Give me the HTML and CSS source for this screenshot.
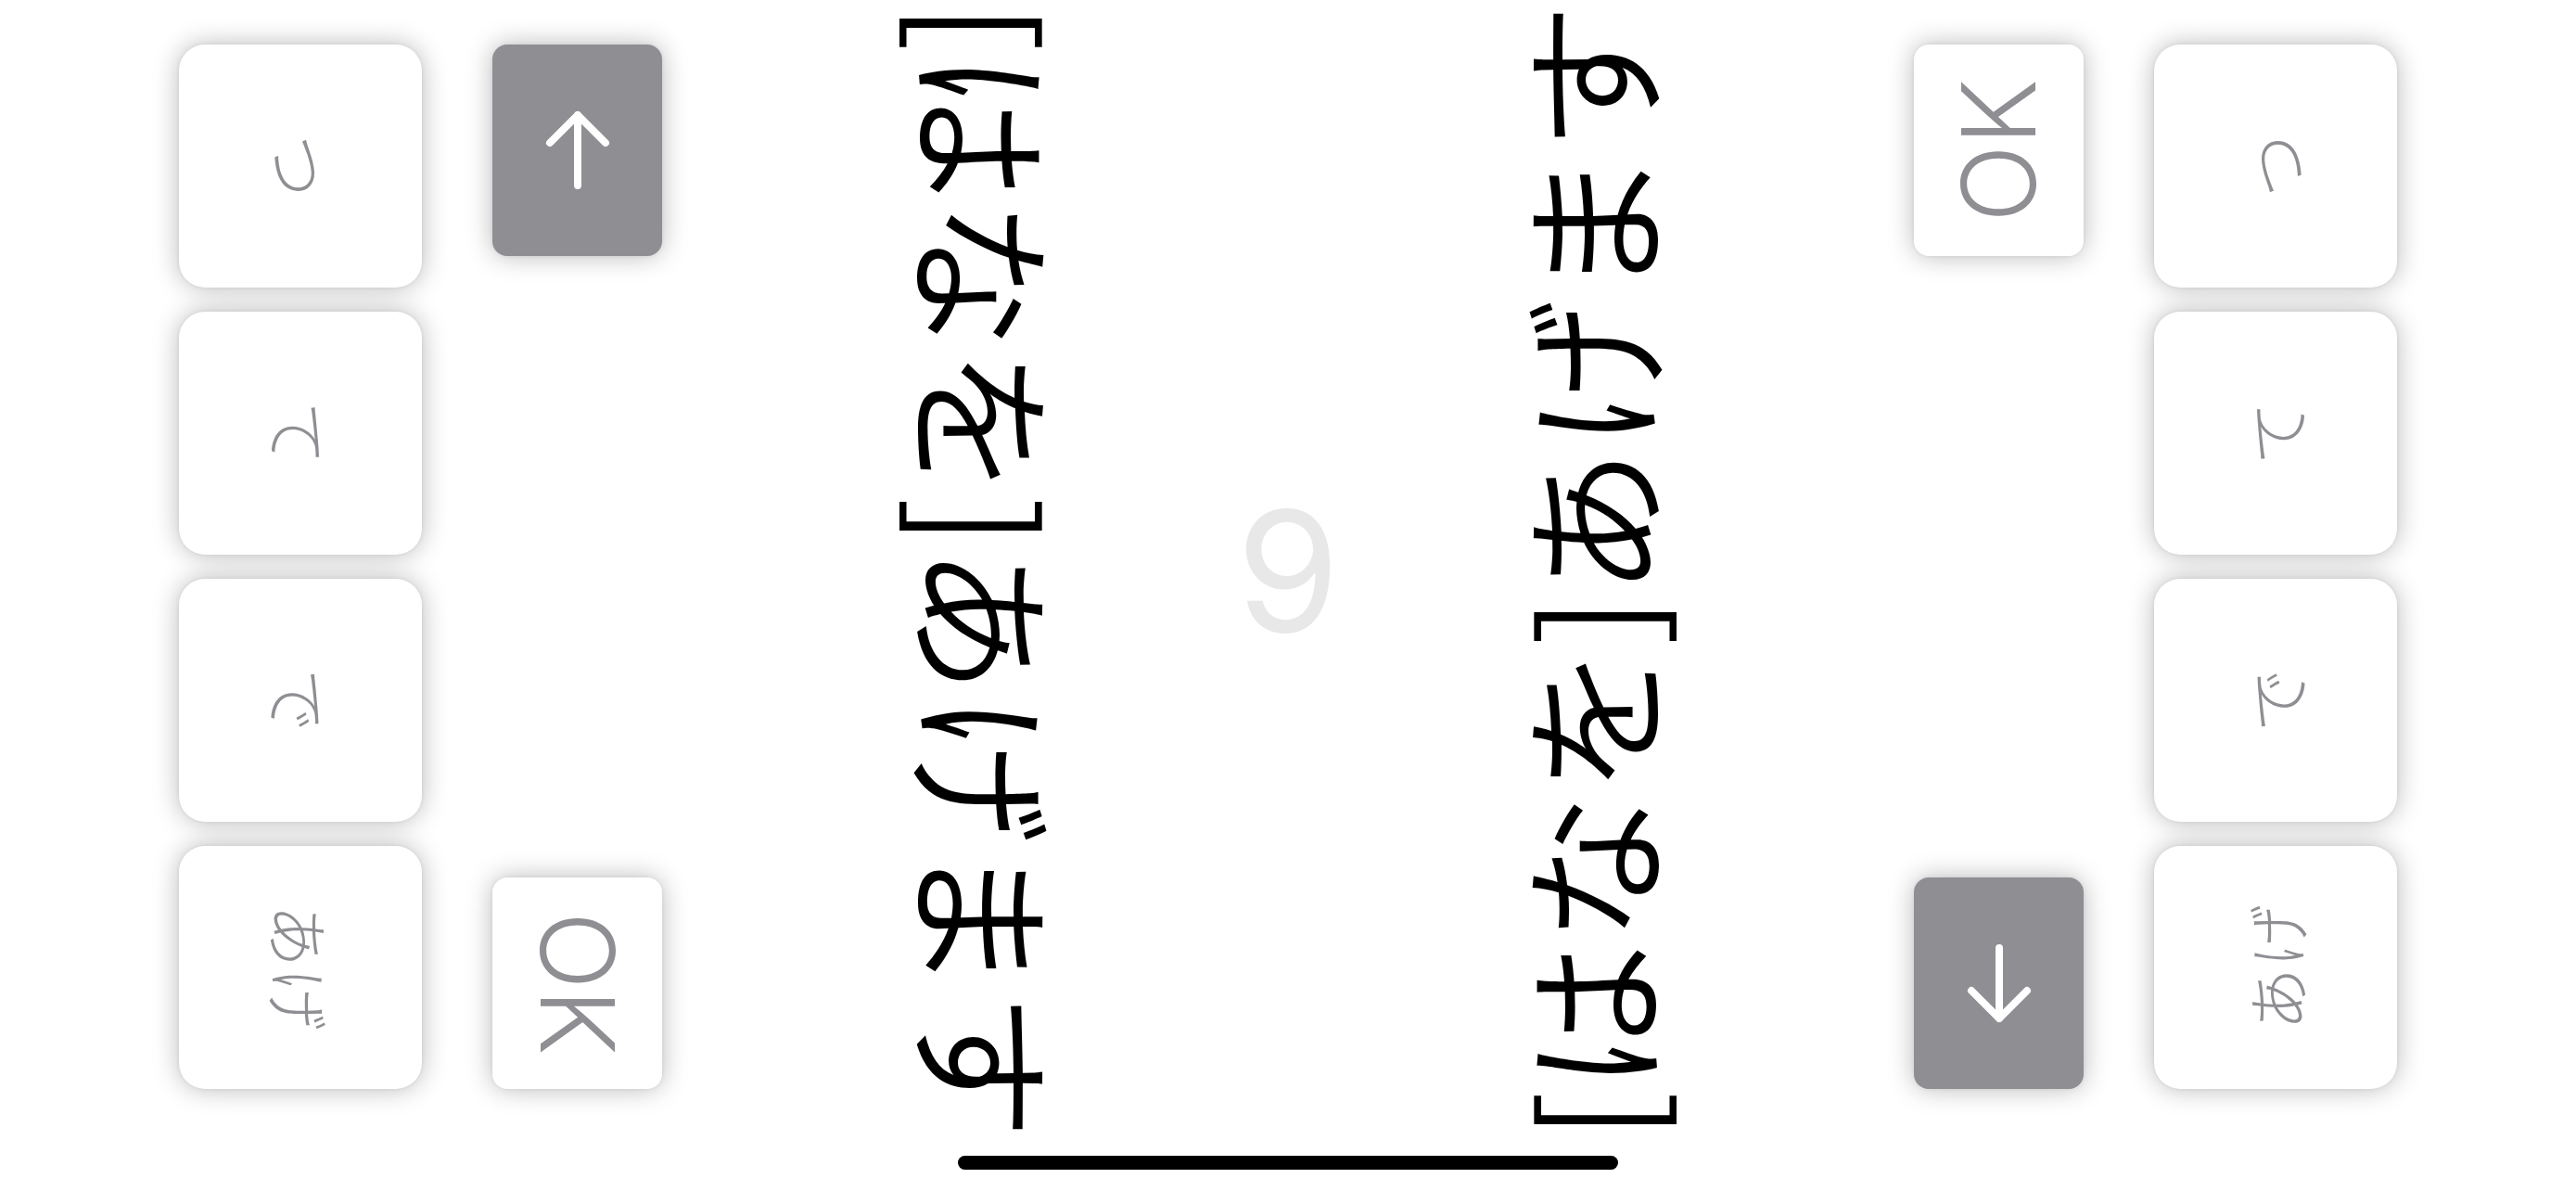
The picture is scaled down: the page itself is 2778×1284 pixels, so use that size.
FILE: index.html
```html
<!DOCTYPE html>
<html lang="ja">
<head>
<meta charset="utf-8">
<title>はなをあげます</title>
<link rel="stylesheet" href="styles.css">
</head>
<body>
<div class="screen">
  <section class="panel panel-left">
    <div class="keys">
      <div class="key"><span class="lbl">つ</span></div>
      <div class="key"><span class="lbl">て</span></div>
      <div class="key"><span class="lbl">で</span></div>
      <div class="key"><span class="lbl">あげ</span></div>
    </div>
    <div class="side">
      <div class="key key-small key-dark">
        <svg class="arrow" viewBox="0 0 72 88" width="72" height="88"><path d="M36 6 V82 M6 36 L36 6 L66 36"/></svg>
      </div>
      <div class="key key-small"><span class="lbl ok">OK</span></div>
    </div>
  </section>

  <main class="middle">
    <div class="stage">
      <div class="phrase">[はなを]あげます</div>
      <div class="count">9</div>
      <div class="phrase flip">[はなを]あげます</div>
    </div>
    <div class="home-bar"></div>
  </main>

  <section class="panel panel-right">
    <div class="side">
      <div class="key key-small"><span class="lbl ok flip">OK</span></div>
      <div class="key key-small key-dark">
        <svg class="arrow" viewBox="0 0 72 88" width="72" height="88"><path d="M36 6 V82 M6 52 L36 82 L66 52"/></svg>
      </div>
    </div>
    <div class="keys">
      <div class="key"><span class="lbl flip">つ</span></div>
      <div class="key"><span class="lbl flip">て</span></div>
      <div class="key"><span class="lbl flip">で</span></div>
      <div class="key"><span class="lbl flip">あげ</span></div>
    </div>
  </section>
</div>
</body>
</html>
```

FILE: styles.css
```css
html, body {
  margin: 0;
  padding: 0;
  background: #ffffff;
}

.screen {
  display: flex;
  width: 2778px;
  height: 1284px;
  overflow: hidden;
  font-family: "Noto Sans CJK JP", sans-serif;
  background: #ffffff;
}

.panel {
  display: flex;
  gap: 76px;
  box-sizing: border-box;
  width: 714px;
  height: 1284px;
  padding-top: 48px;
  flex: none;
}

.panel-left {
  padding-left: 193px;
}

.panel-right {
  padding-right: 193px;
}

.keys {
  display: flex;
  flex-direction: column;
  gap: 26px;
  width: 262px;
}

.key {
  width: 262px;
  height: 262px;
  background: #ffffff;
  border-radius: 28px;
  box-shadow: 0 0 28px rgba(0, 0, 0, 0.28), 0 0 4px rgba(0, 0, 0, 0.07);
  display: flex;
  align-items: center;
  justify-content: center;
  flex: none;
}

.side {
  display: flex;
  flex-direction: column;
  justify-content: space-between;
  width: 183px;
  height: 1126px;
}

.key-small {
  width: 183px;
  height: 228px;
  border-radius: 16px;
}

.key-dark {
  background: #8e8e93;
}

.arrow {
  display: block;
  fill: none;
  stroke: #ffffff;
  stroke-width: 8;
  stroke-linecap: round;
  stroke-linejoin: round;
}

.lbl {
  writing-mode: vertical-rl;
  text-orientation: sideways;
  font-size: 68px;
  font-weight: 300;
  line-height: 1.3;
  color: #8e8e93;
}

.ok {
  font-family: Inter, "Liberation Sans", sans-serif;
  font-size: 110px;
  font-weight: 300;
}

.flip {
  transform: rotate(180deg);
}

.middle {
  flex: 1;
  display: flex;
  flex-direction: column;
  align-items: center;
}

.stage {
  align-self: stretch;
  height: 1232px;
  display: flex;
  align-items: center;
  justify-content: center;
}

.phrase {
  writing-mode: vertical-rl;
  text-orientation: sideways;
  font-size: 160px;
  font-weight: 350;
  line-height: 192px;
  width: 192px;
  color: #000000;
  white-space: nowrap;
}

.count {
  width: 452px;
  text-align: center;
  font-family: Inter, "Liberation Sans", sans-serif;
  font-size: 180px;
  line-height: 1.2;
  color: #e8e8e8;
}

.home-bar {
  width: 712px;
  height: 15px;
  border-radius: 8px;
  background: #000000;
  margin-top: 14px;
}
```
